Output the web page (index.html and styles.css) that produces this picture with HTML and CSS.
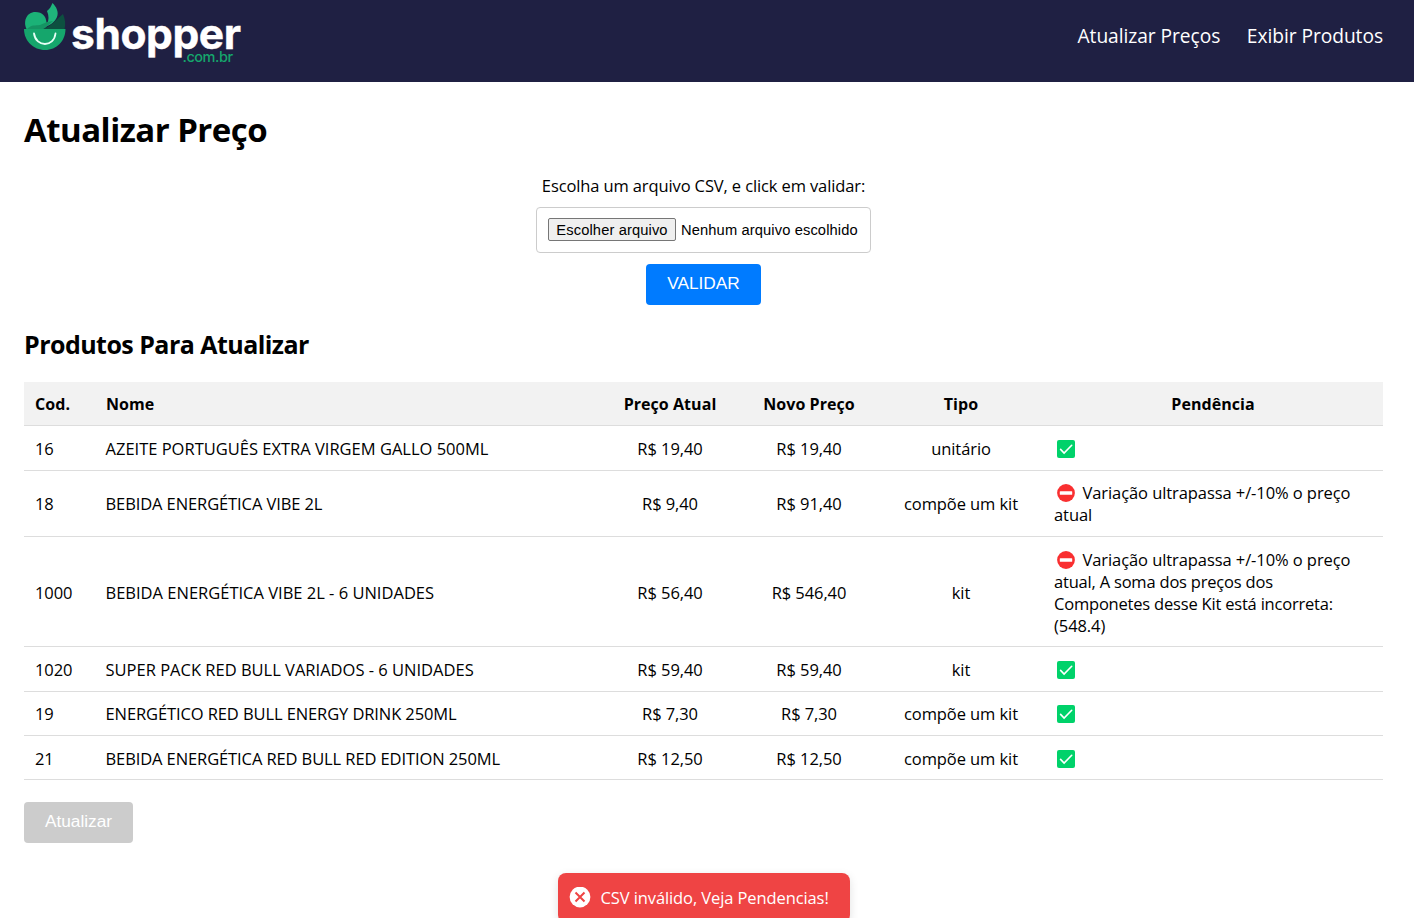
FILE: index.html
```html
<!DOCTYPE html>
<html lang="pt-BR">
<head>
<meta charset="utf-8">
<title>Atualizar Preço</title>
<link rel="stylesheet" href="styles.css">
</head>
<body>
<svg width="0" height="0" class="sprite">
  <symbol id="ok" viewBox="0 0 18 18"><rect width="18" height="18" rx="2" fill="#00d26a"/><path d="M3.6 9.4l3.5 3.7 7.6-7.8" fill="none" stroke="#fff" stroke-width="1.6" stroke-linecap="round"/></symbol>
  <symbol id="no" viewBox="0 0 18 18"><circle cx="9" cy="9" r="8.9" fill="#f92f30"/><rect x="2.8" y="7.2" width="12.4" height="3.6" rx=".6" fill="#fff"/></symbol>
</svg>
<header class="header">
  <svg class="logo" width="220" height="66" viewBox="0 0 220 66">
    <path d="M1 29h41.500c0 12-9 21-20.500 21S1 41 1 29z" fill="#15a66c"/>
    <path d="M3.500 29C0 22 3 12 12.500 12c7 0 10.500 4 11 11l-6 6z" fill="#1bb277"/>
    <path d="M24 24c2-4 2-8 0-13 3-2 4-5 5.500-8 4 4 6.500 9 4.500 14-2 5-7 9-14 10z" fill="#1fb57b"/>
    <path d="M4 29c5-5 8-3 13-4l7-3 6-1-9 8H4z" fill="#159463"/>
    <path d="M20 29c7-2 13-9 20-15 2 5 3 10 1.500 15z" fill="#0d5040"/>
    <path d="M11 33.500c2 14 20 14 21.500 0" fill="none" stroke="#e6fff5" stroke-width="1.800" stroke-linecap="round"/>
    <text class="logo-name" x="48" y="48.500" textLength="170">shopper</text>
    <text class="logo-domain" x="159.500" y="61.800" textLength="50.500">.com.br</text>
  </svg>
  <nav class="nav"><a class="nav-link">Atualizar Preços</a><a class="nav-link">Exibir Produtos</a></nav>
</header>
<main class="main">
  <h1 class="title">Atualizar Preço</h1>
  <form class="form">
    <label class="label">Escolha um arquivo CSV, e click em validar:</label>
    <div class="file"><span class="file-button">Escolher arquivo</span><span class="file-name">Nenhum arquivo escolhido</span></div>
    <button class="button validate" type="button">VALIDAR</button>
  </form>
  <h2 class="subtitle">Produtos Para Atualizar</h2>
  <table class="table">
    <colgroup><col class="c-cod"><col class="c-name"><col class="c-old"><col class="c-new"><col class="c-type"><col class="c-issue"></colgroup>
    <thead><tr class="h44"><th class="left">Cod.</th><th class="left">Nome</th><th>Preço Atual</th><th>Novo Preço</th><th>Tipo</th><th>Pendência</th></tr></thead>
    <tbody>
      <tr class="h45"><td>16</td><td class="caps">AZEITE PORTUGUÊS EXTRA VIRGEM GALLO 500ML</td><td class="mid">R$ 19,40</td><td class="mid">R$ 19,40</td><td class="mid">unitário</td><td><svg class="icon"><use href="#ok"/></svg></td></tr>
      <tr class="h66"><td>18</td><td class="caps snug">BEBIDA ENERGÉTICA VIBE 2L</td><td class="mid">R$ 9,40</td><td class="mid">R$ 91,40</td><td class="mid">compõe um kit</td><td><svg class="icon"><use href="#no"/></svg>Variação ultrapassa +/-10% o preço<br>atual</td></tr>
      <tr class="h110"><td>1000</td><td class="caps">BEBIDA ENERGÉTICA VIBE 2L - 6 UNIDADES</td><td class="mid">R$ 56,40</td><td class="mid">R$ 546,40</td><td class="mid">kit</td><td><svg class="icon"><use href="#no"/></svg>Variação ultrapassa +/-10% o preço<br><span class="tight">atual, A soma dos preços dos<br>Componetes desse Kit está incorreta:</span><br>(548.4)</td></tr>
      <tr class="h45"><td>1020</td><td class="caps">SUPER PACK RED BULL VARIADOS - 6 UNIDADES</td><td class="mid">R$ 59,40</td><td class="mid">R$ 59,40</td><td class="mid">kit</td><td><svg class="icon"><use href="#ok"/></svg></td></tr>
      <tr class="h44"><td>19</td><td class="caps snug">ENERGÉTICO RED BULL ENERGY DRINK 250ML</td><td class="mid">R$ 7,30</td><td class="mid">R$ 7,30</td><td class="mid">compõe um kit</td><td><svg class="icon"><use href="#ok"/></svg></td></tr>
      <tr class="h44 low"><td>21</td><td class="caps snug">BEBIDA ENERGÉTICA RED BULL RED EDITION 250ML</td><td class="mid">R$ 12,50</td><td class="mid">R$ 12,50</td><td class="mid">compõe um kit</td><td><svg class="icon"><use href="#ok"/></svg></td></tr>
    </tbody>
  </table>
  <button class="button update" type="button" disabled>Atualizar</button>
</main>
<div class="toast">
  <svg width="22" height="22" viewBox="0 0 22 22"><circle cx="11" cy="10" r="10.400" fill="#fff"/><path d="M6.500 5.500l9 9M15.500 5.500l-9 9" stroke="#ef4444" stroke-width="2"/></svg>
  <span>CSV inválido, Veja Pendencias!</span>
</div>
</body>
</html>
```
FILE: styles.css
```css
* { box-sizing: border-box; }
html, body { height: 918px; overflow: hidden; }
body { margin: 0; background: #fff; color: #000; font-family: "Open Sans", "Noto Sans", sans-serif; font-size: 16.5px; line-height: 22px; }
.sprite { position: absolute; }
.header { height: 82px; background: #1f2043; padding: 0 31px 0 23px; display: flex; justify-content: space-between; align-items: flex-start; }
.logo { display: block; overflow: visible; }
.logo-name { font: 700 42.5px Inter, sans-serif; fill: #fff; stroke: #fff; stroke-width: 0.4px; }
.logo-domain { font: 500 14.5px Inter, sans-serif; fill: #15a66c; }
.nav { display: flex; gap: 26.5px; padding-top: 22px; }
.nav-link { color: #fff; font-size: 19.2px; line-height: 28px; letter-spacing: -0.05px; white-space: nowrap; }
.main { padding: 0 31px 0 24px; }
.title { margin: 0; padding-top: 24px; font-size: 33px; line-height: 48px; font-weight: 700; letter-spacing: -0.53px; }
.form { display: flex; flex-direction: column; align-items: center; padding-top: 21px; }
.label { letter-spacing: -0.12px; white-space: nowrap; }
.file { margin-top: 10px; width: 335px; height: 46px; border: 1px solid #ccc; border-radius: 4px; padding: 0 11px; display: flex; align-items: center; gap: 5px; font: 14.7px "Liberation Sans", sans-serif; letter-spacing: 0.12px; white-space: nowrap; }
.file-button { width: 128px; height: 23px; margin-bottom: 1px; border: 1px solid #767676; border-radius: 2px; background: #efefef; text-align: center; line-height: 22px; }
.button { border: 0; border-radius: 4px; height: 41px; padding: 0 0 3px; color: #fff; font: 17.3px "Liberation Sans", sans-serif; }
.validate { width: 115px; margin-top: 11px; background: #007bff; }
.subtitle { margin: 0; padding-top: 22px; font-size: 25px; line-height: 34px; letter-spacing: -0.54px; font-weight: 700; }
.table { margin-top: 21px; width: 1359px; table-layout: fixed; border-collapse: separate; border-spacing: 0; }
.c-cod { width: 71px; }
.c-name { width: 506px; }
.c-old { width: 138px; }
.c-new { width: 140px; }
.c-type { width: 164px; }
.c-issue { width: 340px; }
th, td { padding: 0 11px; border-bottom: 1px solid #ddd; vertical-align: middle; text-align: left; letter-spacing: -0.08px; white-space: nowrap; }
th { background: #f2f2f2; text-align: center; font-size: 16px; font-weight: 700; letter-spacing: 0.05px; }
.left { text-align: left; }
.mid { text-align: center; }
.caps { padding-left: 10.5px; letter-spacing: 0; }
.snug { letter-spacing: -0.1px; }
.tight { letter-spacing: -0.2px; }
.h44 { height: 44px; }
.h45 { height: 45px; }
.h66 { height: 66px; }
.h110 { height: 110px; }
.h45 td { padding-top: 1px; }
.h110 td, .low td { padding-top: 2px; }
.icon { width: 18px; height: 18px; margin: -2px 8px 0 2.5px; vertical-align: -3px; }
.update { display: block; width: 109px; margin-top: 22px; background: #ccc; }
.toast { position: absolute; left: 558px; top: 873px; width: 292px; height: 50px; border-radius: 8px; background: #ef4444; color: #fff; box-shadow: 0 3px 10px rgba(0,0,0,.12); display: flex; align-items: center; gap: 10px; padding-left: 10.5px; letter-spacing: -0.1px; white-space: nowrap; }
```
